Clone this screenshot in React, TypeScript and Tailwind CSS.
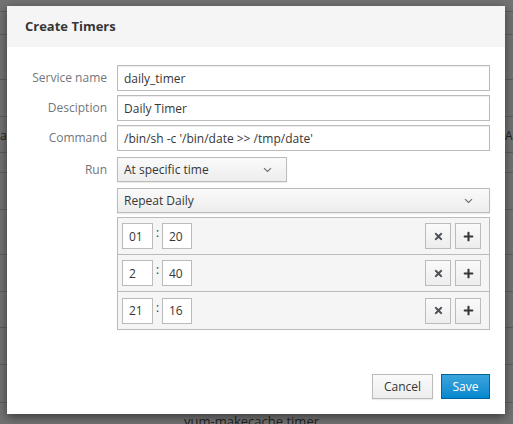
import { FaTimes, FaPlus } from "react-icons/fa";

const font = { fontFamily: '"Open Sans", "Liberation Sans", sans-serif' };

function Chevron() {
  return (
    <svg width="9" height="6" viewBox="0 0 9 6" className="text-[#6b6b6b]">
      <path d="M1 1.2 L4.5 4.5 L8 1.2" fill="none" stroke="currentColor" strokeWidth="1.1" />
    </svg>
  );
}

function Field({ label, value }: { label: string; value: string }) {
  return (
    <>
      <div className="text-right text-[#72767b] leading-[26px]">{label}</div>
      <input
        readOnly
        value={value}
        className="h-[26px] border border-[#bbbbbb] px-[6px] text-[#363636] outline-none shadow-[inset_0_1px_1px_rgba(0,0,0,0.075)]"
        style={font}
      />
    </>
  );
}

function TimerRow({ h, m, last }: { h: string; m: string; last?: boolean }) {
  return (
    <div className={"flex items-center h-[37px] pl-[4px] pr-[8px] " + (last ? "" : "border-b border-[#bbbbbb]")}>
      <input
        readOnly
        value={h}
        className="w-[31px] h-[26px] border border-[#bbbbbb] bg-white px-[6px] text-[#363636] outline-none"
        style={font}
      />
      <span className="w-[9px] text-center text-[#363636] -mt-[6px]">:</span>
      <input
        readOnly
        value={m}
        className="w-[30px] h-[26px] border border-[#bbbbbb] bg-white px-[6px] text-[#363636] outline-none"
        style={font}
      />
      <div className="ml-auto flex gap-[4px]">
        <button className="w-[26px] h-[26px] border border-[#bbbbbb] bg-gradient-to-b from-[#fafafa] to-[#ededed] flex items-center justify-center text-[#4d5258]">
          <FaTimes size={11} />
        </button>
        <button className="w-[26px] h-[26px] border border-[#bbbbbb] bg-gradient-to-b from-[#fafafa] to-[#ededed] flex items-center justify-center text-[#363636]">
          <FaPlus size={11} />
        </button>
      </div>
    </div>
  );
}

export default function App() {
  const bgRows = [12, 23, 45, 37, 36, 20, 37, 45, 37, 36, 37, 38];
  return (
    <div className="relative w-[513px] h-[424px] overflow-hidden bg-[#737373] text-[12px]" style={font}>
      {/* page behind the dialog */}
      <div className="flex flex-col">
        {bgRows.map((hgt, i) => (
          <div key={i} className="border-b border-[#5f5f5f] relative" style={{ height: hgt }}>
            {i === 4 && <span className="absolute left-0 top-[10px] text-[#222]">a</span>}
            {i === 4 && <span className="absolute left-[505px] top-[10px] text-[#222]">A</span>}
          </div>
        ))}
        <div className="text-center text-[#222] text-[13px] mt-[9px] pr-[10px]">yum-makecache.timer</div>
      </div>

      {/* dialog */}
      <div className="absolute left-[7px] top-[6px] w-[498px] h-[408px] bg-white flex flex-col shadow-[0_3px_10px_rgba(0,0,0,0.5)]">
        <div className="h-[41px] bg-[#f5f5f5] px-[18px] flex items-center">
          <h1 className="text-[13px] font-bold text-[#363636]">Create Timers</h1>
        </div>

        <div className="pt-[18px] pl-[18px] pr-[15px] grid grid-cols-[82px_1fr] gap-x-[10px] gap-y-[4px]">
          <Field label="Service name" value="daily_timer" />
          <Field label="Desciption" value="Daily Timer" />
          <Field label="Command" value="/bin/sh -c '/bin/date >> /tmp/date'" />

          <div className="text-right text-[#72767b] leading-[25px] mt-[2px]">Run</div>
          <div className="mt-[2px]">
            <div className="w-[170px] h-[25px] border border-[#bbbbbb] bg-gradient-to-b from-[#fafafa] to-[#ededed] shadow-[0_1px_1px_rgba(3,3,3,0.08)] flex items-center pl-[6px] pr-[14px] text-[#363636]">
              <span>At specific time</span>
              <span className="ml-auto"><Chevron /></span>
            </div>
          </div>

          <div />
          <div className="mt-[2px] h-[25px] border border-[#bbbbbb] bg-gradient-to-b from-[#fafafa] to-[#ededed] shadow-[0_1px_1px_rgba(3,3,3,0.08)] flex items-center pl-[6px] pr-[16px] text-[#363636]">
            <span>Repeat Daily</span>
            <span className="ml-auto"><Chevron /></span>
          </div>

          <div />
          <div className="border border-[#bbbbbb] bg-[#f5f5f5]">
            <TimerRow h="01" m="20" />
            <TimerRow h="2" m="40" />
            <TimerRow h="21" m="16" last />
          </div>
        </div>

        <div className="mt-auto pb-[15px] pr-[15px] flex justify-end gap-[8px]">
          <button className="w-[61px] h-[25px] border border-[#bbbbbb] bg-gradient-to-b from-[#fafafa] to-[#ededed] text-[#363636] shadow-[0_1px_1px_rgba(3,3,3,0.08)]" style={font}>
            Cancel
          </button>
          <button className="w-[49px] h-[25px] border border-[#00659c] bg-gradient-to-b from-[#39a5dc] to-[#0088ce] text-white" style={font}>
            Save
          </button>
        </div>
      </div>
    </div>
  );
}
